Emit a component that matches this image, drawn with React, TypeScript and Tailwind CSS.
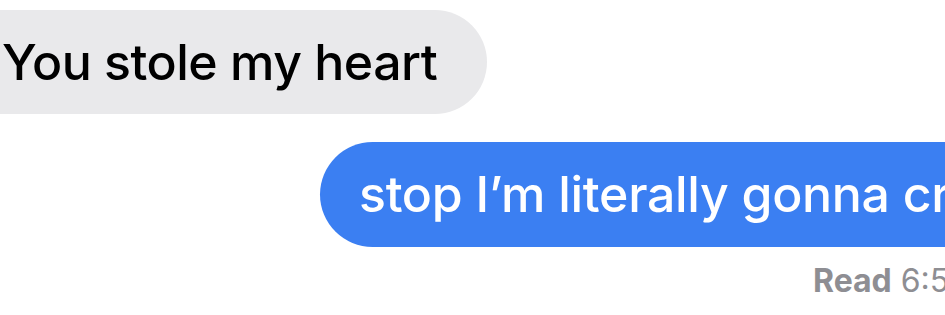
export default function App() {
  return (
    <div
      className="w-[945px] h-[315px] overflow-hidden bg-white"
      style={{ fontFamily: 'Inter, "Noto Sans", sans-serif' }}
    >
      {/* Received */}
      <div className="pt-[10px] flex">
        <div className="h-[104px] w-[487px] shrink-0 bg-[#e9e9eb] rounded-r-full flex items-center pl-[2px] text-[50px] font-medium text-black whitespace-nowrap tracking-[-0.5px]">
          You stole my heart
        </div>
      </div>

      {/* Sent */}
      <div className="mt-[28px] flex">
        <div className="ml-[320px] h-[105px] w-[700px] shrink-0 bg-[#3b7ff2] rounded-l-full flex items-center pl-[39px] text-[50px] font-medium text-white whitespace-nowrap tracking-[-0.3px]">
          stop I’m literally gonna cry
        </div>
      </div>

      {/* Status */}
      <div className="mt-[10px] flex">
        <div className="ml-[813px] shrink-0 whitespace-nowrap text-[32px] text-[#8e8e93]">
          <span className="font-bold">Read</span> 6:52 PM
        </div>
      </div>
    </div>
  )
}
